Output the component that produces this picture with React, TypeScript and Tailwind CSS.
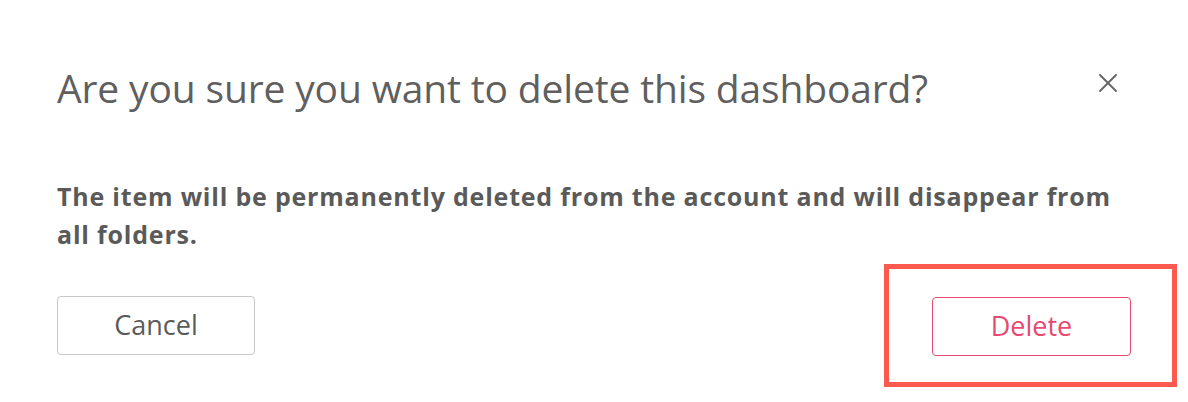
import { X } from "lucide-react";

export default function App() {
  return (
    <div className="h-[402px] w-[1188px] bg-white font-['Open_Sans',sans-serif] text-[#5a5a5a]">
      <div className="flex items-start justify-between pl-[57px] pr-[64px] pt-[64px]">
        <h1 className="text-[39px] leading-[48px] font-normal tracking-[-0.15px] text-[#5f5f5f]">Are you sure you want to delete this dashboard?</h1>
        <button className="mt-[3px] text-[#666]"><X size={32} strokeWidth={1.4} /></button>
      </div>
      <p className="mt-[65px] pl-[57px] pr-[58px] text-[25px] leading-[38px] font-bold tracking-[0.8px] text-[#5a5a5a]">
        The item will be permanently deleted from the account and will disappear from all folders.
      </p>
      <div className="mt-[11px] flex items-center justify-between pl-[57px] pr-[11px]">
        <button className="h-[59px] w-[198px] rounded-[4px] border border-[#c8c8c8] text-[27px] text-[#5a5a5a]">Cancel</button>
        <div className="border-[5px] border-[#ff5a4f] pl-[43px] pr-[41px] pt-[28px] pb-[26px]">
          <button className="h-[59px] w-[199px] rounded-[4px] border border-[#e84a6f] text-[27px] text-[#e84a6f]">Delete</button>
        </div>
      </div>
    </div>
  );
}
